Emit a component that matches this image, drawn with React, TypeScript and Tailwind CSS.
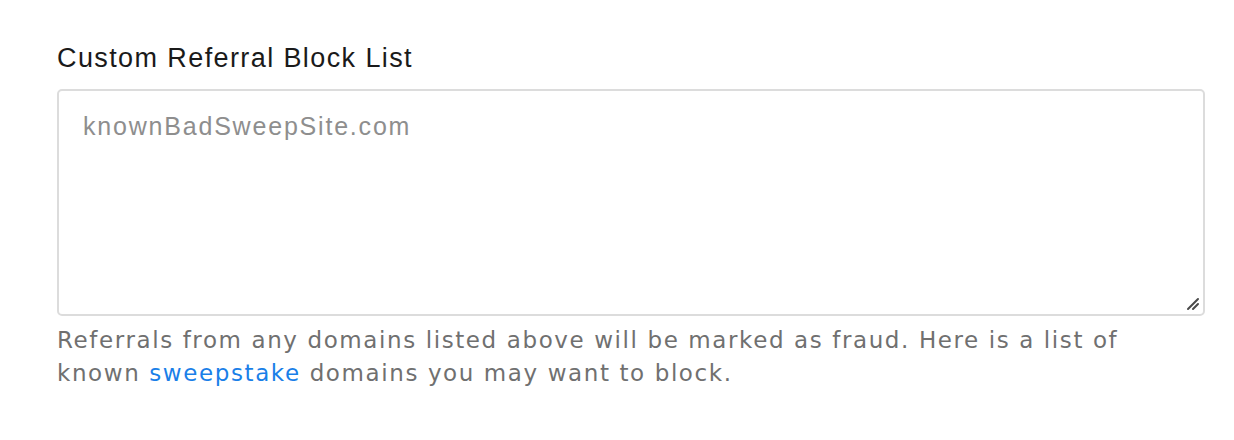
export default function App() {
  return (
    <div className="w-[1234px] h-[440px] bg-white">
      <div className="pt-[40px] pl-[57px] pr-[29px]">
        <label className="block text-[27px] leading-[36px] tracking-[1.4px] text-[#1a1a1a] font-['Liberation_Sans',Arial,sans-serif]">
          Custom Referral Block List
        </label>
        <div className="relative mt-[13px]">
          <textarea
            className="block w-full h-[227px] resize-none border-2 border-[#dcdcdc] rounded-[5px] px-[24px] py-[18px] text-[25px] leading-[34px] tracking-[1.8px] font-['Liberation_Sans',Arial,sans-serif] text-[#333] placeholder:text-[#8e8e8e] outline-none"
            placeholder="knownBadSweepSite.com"
          />
          <svg
            className="absolute right-[4px] bottom-[4px] pointer-events-none"
            width="16"
            height="16"
            viewBox="0 0 16 16"
          >
            <path d="M3 13 L13 3 M8 13 L13 8" stroke="#4a4a4a" strokeWidth="2" strokeLinecap="round" />
          </svg>
        </div>
        <p className="mt-[8px] text-[23px] leading-[33px] tracking-[1.6px] text-[#707070] font-['DejaVu_Sans',Verdana,sans-serif]">
          Referrals from any domains listed above will be marked as fraud. Here is a list of
          <br />
          known <a href="#" className="text-[#1a7fe8]">sweepstake</a> domains you may want to block.
        </p>
      </div>
    </div>
  );
}
